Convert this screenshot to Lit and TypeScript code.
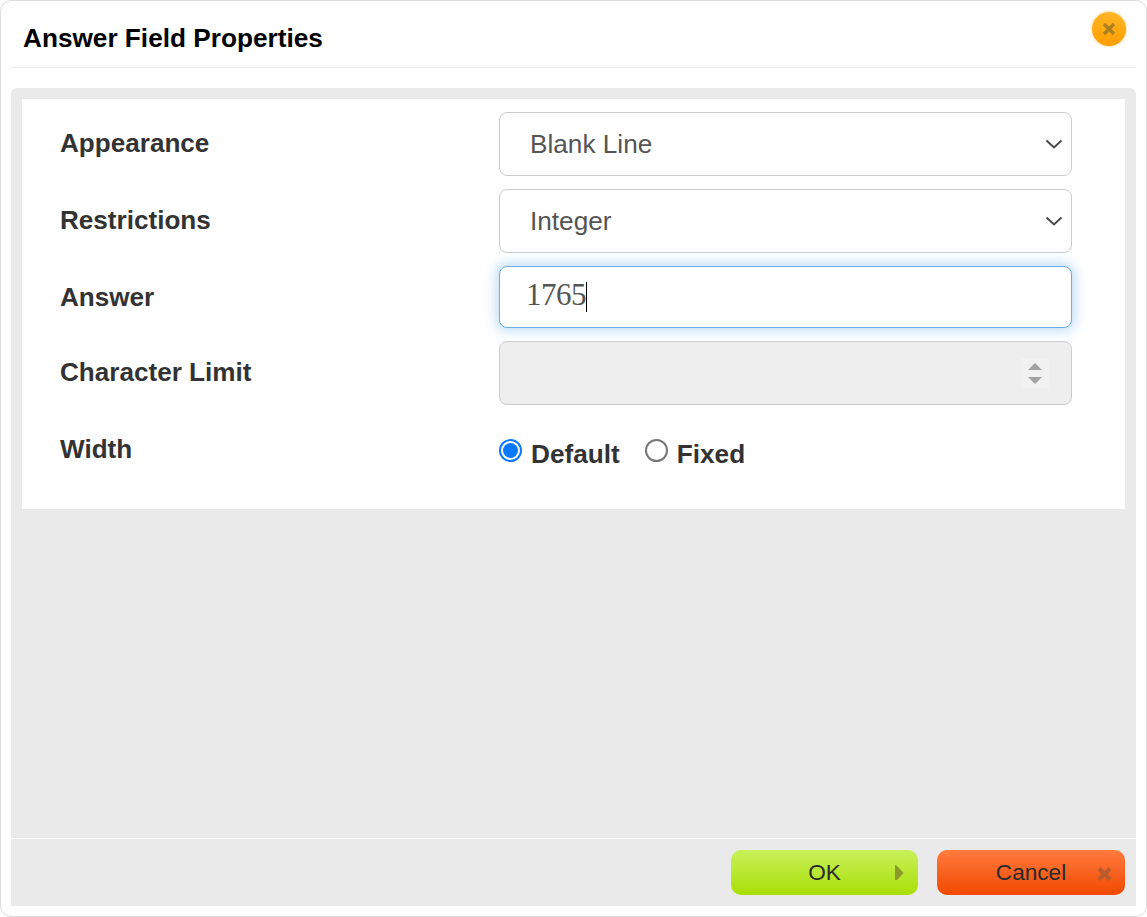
import { LitElement, html, css } from "lit";
import { customElement } from "lit/decorators.js";

@customElement("app-root")
export class AppRoot extends LitElement {
  static styles = css`
    :host { display: block; width: 1147px; height: 917px; font-family: "Liberation Sans", Arial, sans-serif; background: #fff; }
    * { box-sizing: border-box; }
    .dialog { position: relative; width: 1147px; height: 917px; border: 1px solid #dcdcdc; border-radius: 11px; background: #fff; display: flex; flex-direction: column; padding: 0 10px 10px; }
    .head { height: 67px; flex: none; border-bottom: 1px solid #ececec; padding: 21px 0 0 12px; margin-bottom: 20px; }
    .title { margin: 0; font-size: 26.2px; line-height: 32px; font-weight: 700; color: #000; }
    .close { position: absolute; left: 1091px; top: 11px; width: 34px; height: 34px; border-radius: 50%; background: linear-gradient(#ffb524, #ff9e00); box-shadow: 0 0 3px 0 rgba(255,180,50,.8); display: flex; align-items: center; justify-content: center; }
    .body { flex: 1; background: #eaeaea; border-radius: 6px 6px 0 0; display: flex; flex-direction: column; padding-top: 11px; width: 1125px; }
    .panel { margin: 0 11px; background: #fff; padding: 13px 0 29px 38px; display: grid; grid-template-columns: 439px 573px; row-gap: 13px; align-items: center; }
    .spacer { flex: 1; }
    label { font-size: 26.1px; font-weight: 700; color: #333; line-height: 32px; }
    .shift { position: relative; top: -1px; }
    .select { height: 64px; border: 1px solid #ccc; border-radius: 8px; background: #fff; display: flex; align-items: center; justify-content: space-between; padding: 0 8px 0 30px; font-size: 26.2px; color: #555; }
    .input { height: 62px; border: 1px solid #69aeea; border-radius: 8px; background: #fff; box-shadow: 0 0 12px 3px rgba(102,175,233,.42); display: flex; align-items: center; padding: 0 0 0 26px; font-family: "Liberation Serif", serif; font-size: 31px; letter-spacing: -0.5px; color: #555; }
    .num { margin-bottom: 4px; }
    .caret { width: 1px; height: 30px; background: #000; }
    .disabled { height: 64px; border: 1px solid #ccc; border-radius: 8px; background: #eee; display: flex; align-items: center; justify-content: flex-end; padding-right: 22px; }
    .spin { width: 28px; height: 30px; background: #f1f1f1; display: flex; flex-direction: column; align-items: center; justify-content: center; gap: 7px; }
    .up { width: 0; height: 0; border: 7px solid transparent; border-top: 0; border-bottom: 7px solid #a2a2a2; }
    .down { width: 0; height: 0; border: 7px solid transparent; border-bottom: 0; border-top: 7px solid #a2a2a2; }
    .radios { height: 62px; display: flex; align-items: flex-start; padding-top: 21px; }
    .opt { display: flex; align-items: flex-start; font-size: 26.2px; font-weight: 700; color: #333; line-height: 30px; margin-right: 25px; }
    .dot { width: 23px; height: 23px; border-radius: 50%; border: 2px solid #767676; background: #fff; margin-right: 9px; flex: none; }
    .dot.on { border-color: #0a78ff; display: flex; align-items: center; justify-content: center; }
    .dot.on::after { content: ""; width: 15px; height: 15px; border-radius: 50%; background: #0a78ff; }
    .foot { height: 68px; flex: none; border-top: 1px solid #fff; display: flex; justify-content: flex-end; gap: 19px; padding: 11px 11px 0 0; }
    .btn { position: relative; height: 45px; border: 0; border-radius: 10px; font-family: inherit; font-size: 22.6px; color: #2a2a2a; padding: 0; display: flex; align-items: center; justify-content: center; }
    .ok { width: 187px; background: linear-gradient(#c9f15c, #a9df05); }
    .cancel { width: 188px; background: linear-gradient(#ff7b3f, #f24900); }
    .btn svg { position: absolute; }
    .ok svg { left: 163px; top: 15px; }
    .cancel svg { left: 160px; top: 17px; }
  `;

  private chevron() {
    return html`<svg width="18" height="12" viewBox="0 0 18 12"><path d="M1.5 2.5 L9 9.5 L16.5 2.5" fill="none" stroke="#4a4a4a" stroke-width="2"/></svg>`;
  }

  render() {
    return html`
      <div class="dialog">
        <div class="head"><h1 class="title">Answer Field Properties</h1></div>
        <div class="close">
          <svg width="14" height="14" viewBox="0 0 14 14"><path d="M2 2 L12 12 M12 2 L2 12" stroke="#ad7f22" stroke-width="3.4"/></svg>
        </div>
        <div class="body">
          <div class="panel">
            <label class="shift">Appearance</label>
            <div class="select">Blank Line ${this.chevron()}</div>
            <label class="shift">Restrictions</label>
            <div class="select">Integer ${this.chevron()}</div>
            <label>Answer</label>
            <div class="input"><span class="num">1765</span><span class="caret"></span></div>
            <label class="shift">Character Limit</label>
            <div class="disabled"><div class="spin"><div class="up"></div><div class="down"></div></div></div>
            <label>Width</label>
            <div class="radios">
              <div class="opt"><div class="dot on"></div><span>Default</span></div>
              <div class="opt"><div class="dot"></div><span>Fixed</span></div>
            </div>
          </div>
          <div class="spacer"></div>
          <div class="foot">
            <button class="btn ok">OK<svg width="10" height="16" viewBox="0 0 10 16"><path d="M1 0 L3 1 L9.5 8 L3 15 L1 15 Z" fill="#8c9a2c"/></svg></button>
            <button class="btn cancel">Cancel<svg width="15" height="14" viewBox="0 0 15 14"><path d="M2 1.5 L13 12.5 M13 1.5 L2 12.5" stroke="#b75c2a" stroke-width="4"/></svg></button>
          </div>
        </div>
      </div>
    `;
  }
}
